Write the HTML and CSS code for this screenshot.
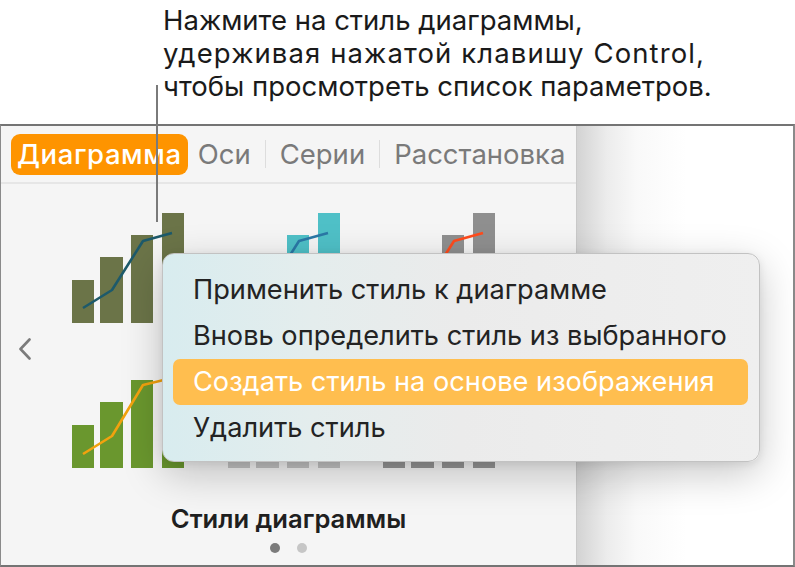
FILE: index.html
```html
<!DOCTYPE html>
<html lang="ru">
<head>
<meta charset="utf-8">
<title>Стили диаграммы</title>
<link rel="stylesheet" href="styles.css">
</head>
<body>
<div class="page">
  <div class="callout">
    <p class="callout-text">Нажмите на стиль диаграммы,<br><span class="callout-wide">удерживая нажатой клавишу Control,</span><br>чтобы просмотреть список параметров.</p>
  </div>
  <div class="frame">
    <aside class="sidebar">
      <nav class="tabs">
        <span class="tab tab-active">Диаграмма</span>
        <span class="tab">Оси</span>
        <span class="tab-sep"></span>
        <span class="tab">Серии</span>
        <span class="tab-sep"></span>
        <span class="tab">Расстановка</span>
      </nav>
      <div class="styles">
        <div class="chevron">
          <svg width="14" height="22" viewBox="0 0 14 22"><path d="M11.5 1.5 L2.5 11 L11.5 20.5" fill="none" stroke="#7b7b7b" stroke-width="2.6" stroke-linecap="round" stroke-linejoin="round"/></svg>
        </div>
        <div class="grid">
          <svg class="chart" viewBox="0 0 112 110"><g fill="#6b7448"><rect x="0" y="67" width="22" height="43"/><rect x="28" y="44" width="23" height="66"/><rect x="59" y="22" width="22" height="88"/><rect x="90" y="0" width="22" height="110"/></g><polyline points="11,95 40,77 71,28 100,20" fill="none" stroke="#1d5a6b" stroke-width="2.6" stroke-linejoin="round"/></svg>
          <svg class="chart" viewBox="0 0 112 110"><g fill="#4fc0c7"><rect x="0" y="67" width="22" height="43"/><rect x="28" y="44" width="23" height="66"/><rect x="59" y="22" width="22" height="88"/><rect x="90" y="0" width="22" height="110"/></g><polyline points="11,95 40,77 71,28 100,20" fill="none" stroke="#2a78a6" stroke-width="2.6" stroke-linejoin="round"/></svg>
          <svg class="chart" viewBox="0 0 112 110"><g fill="#8f8f8f"><rect x="0" y="67" width="22" height="43"/><rect x="28" y="44" width="23" height="66"/><rect x="59" y="22" width="22" height="88"/><rect x="90" y="0" width="22" height="110"/></g><polyline points="11,95 40,77 71,28 100,20" fill="none" stroke="#ff4b1c" stroke-width="2.6" stroke-linejoin="round"/></svg>
          <svg class="chart" viewBox="0 0 112 110"><g fill="#6a972e"><rect x="0" y="67" width="22" height="43"/><rect x="28" y="44" width="23" height="66"/><rect x="59" y="22" width="22" height="88"/><rect x="90" y="0" width="22" height="110"/></g><polyline points="11,96 40,78 71,27 100,20" fill="none" stroke="#f2a20e" stroke-width="2.6" stroke-linejoin="round"/></svg>
          <svg class="chart" viewBox="0 0 112 110"><g fill="#c4c4c4"><rect x="0" y="67" width="22" height="43"/><rect x="28" y="44" width="23" height="66"/><rect x="59" y="22" width="22" height="88"/><rect x="90" y="0" width="22" height="110"/></g><polyline points="11,96 40,78 71,27 100,20" fill="none" stroke="#8a8a8a" stroke-width="2.6" stroke-linejoin="round"/></svg>
          <svg class="chart" viewBox="0 0 112 110"><g fill="#969696"><rect x="0" y="67" width="22" height="43"/><rect x="28" y="44" width="23" height="66"/><rect x="59" y="22" width="22" height="88"/><rect x="90" y="0" width="22" height="110"/></g><polyline points="11,96 40,78 71,27 100,20" fill="none" stroke="#555555" stroke-width="2.6" stroke-linejoin="round"/></svg>
        </div>
      </div>
      <div class="styles-title">Стили диаграммы</div>
      <div class="dots"><span class="dot dot-on"></span><span class="dot"></span></div>
    </aside>
    <div class="canvas"></div>
  </div>
  <div class="pointer"></div>
  <ul class="menu">
    <li class="menu-item">Применить стиль к диаграмме</li>
    <li class="menu-item">Вновь определить стиль из выбранного</li>
    <li class="menu-item menu-item-active">Создать стиль на основе изображения</li>
    <li class="menu-item">Удалить стиль</li>
  </ul>
</div>
</body>
</html>
```
FILE: styles.css
```css
* { box-sizing: border-box; }
html, body { margin: 0; padding: 0; }
body {
  background: #ffffff;
  font-family: Inter, "Noto Sans", "DejaVu Sans", sans-serif;
  color: #1c1c1e;
}
.page {
  position: relative;
  width: 795px;
  height: 567px;
  overflow: hidden;
  display: flex;
  flex-direction: column;
}
.callout {
  height: 124px;
  padding: 4px 0 0 163px;
}
.callout-text {
  margin: 0;
  font-size: 27.5px;
  line-height: 33px;
  color: #1a1a1a;
}
.callout-wide {
  letter-spacing: 1.1px;
}
.frame {
  flex: 1;
  display: flex;
  border-top: 2px solid #747474;
  border-left: 1px solid #8a8a8a;
  border-right: 2px solid #8a8a8a;
  border-bottom: 2px solid #747474;
}
.sidebar {
  width: 576px;
  background: #f5f5f5;
  border-right: 1px solid #c9c9c9;
  display: flex;
  flex-direction: column;
}
.tabs {
  height: 58px;
  display: flex;
  align-items: center;
  padding-left: 10px;
  border-bottom: 2px solid #e6e6e6;
}
.tab {
  font-size: 27.5px;
  color: #7a7a7a;
  line-height: 41px;
  padding: 0 6px;
}
.tab-active {
  background: #fe9400;
  color: #ffffff;
  font-weight: 500;
  letter-spacing: 0.6px;
  border-radius: 9px;
  margin-right: 4px;
}
.tab-sep {
  width: 1px;
  height: 28px;
  background: #dddddd;
  margin: 0 8px;
}
.styles {
  display: flex;
  align-items: center;
  padding-top: 29px;
}
.chevron {
  width: 14px;
  height: 22px;
  margin-left: 17px;
  margin-top: 16px;
}
.chevron svg { display: block; }
.grid {
  margin-left: 40px;
  display: grid;
  grid-template-columns: repeat(3, 112px);
  column-gap: 43.5px;
  row-gap: 35px;
}
.chart {
  display: block;
  width: 112px;
  height: 110px;
}
.styles-title {
  margin-top: 36px;
  text-align: center;
  font-size: 25.6px;
  font-weight: 600;
  color: #1f1f1f;
  line-height: 30px;
}
.dots {
  display: flex;
  justify-content: center;
  gap: 17px;
  margin-top: 9px;
}
.dot {
  width: 10px;
  height: 10px;
  border-radius: 50%;
  background: #c6c6c6;
}
.dot-on { background: #7b7b7b; }
.canvas {
  flex: 1;
  background: linear-gradient(to right, #d3d3d3 0px, #ececec 30px, #f9f9f9 60px, #ffffff 110px);
}
.pointer {
  position: absolute;
  left: 156px;
  top: 85px;
  width: 2px;
  height: 137px;
  background: #7a7a7a;
}
.menu {
  position: absolute;
  left: 162px;
  top: 253px;
  width: 598px;
  height: 209px;
  margin: 0;
  padding: 13px 11px 12px 10px;
  list-style: none;
  border-radius: 12px;
  background: linear-gradient(to right, #d8ecef 0%, #e4eded 25%, #ebebeb 50%, #efefef 100%);
  border: 1px solid #c2c2c2;
  box-shadow: 0 12px 40px rgba(0, 0, 0, 0.22), 0 2px 8px rgba(0, 0, 0, 0.08);
}
.menu-item {
  height: 46px;
  line-height: 46px;
  padding-left: 20px;
  font-size: 27.2px;
  color: #232323;
  border-radius: 7px;
}
.menu-item-active {
  background: #ffbe4f;
  color: #ffffff;
}
```
